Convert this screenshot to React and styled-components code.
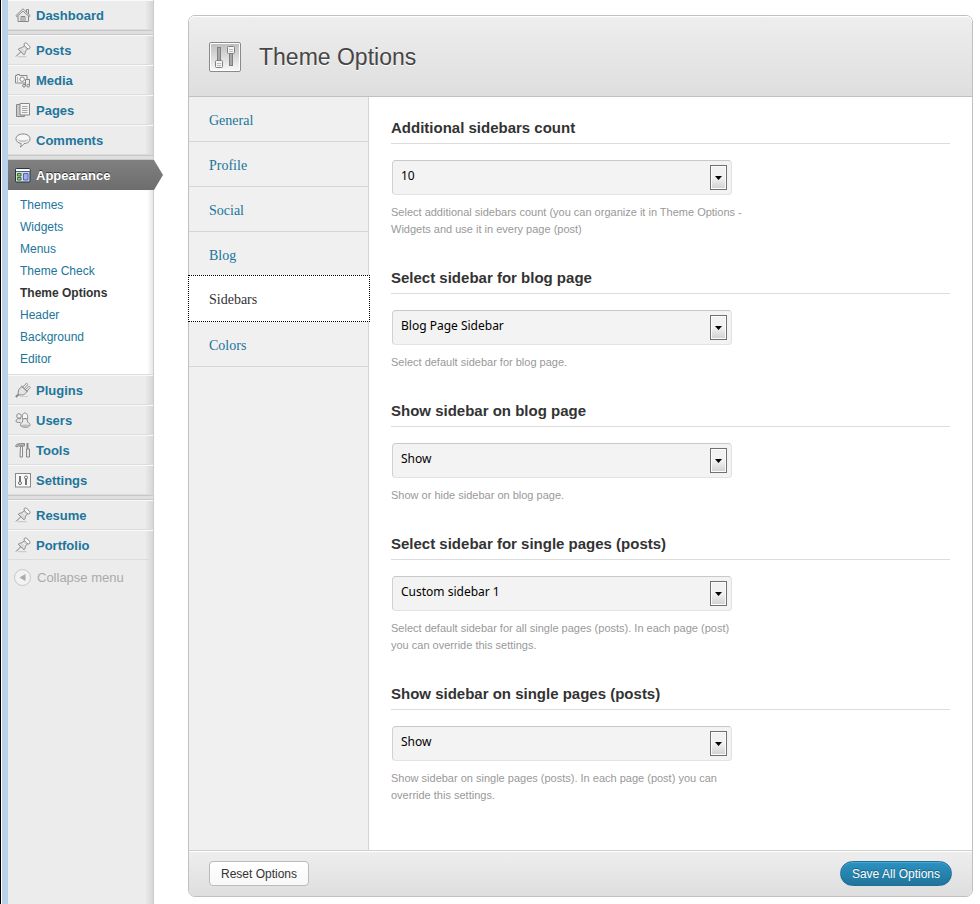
import React, { useId, useState } from "react";
import styled, { createGlobalStyle, css } from "styled-components";

const GlobalStyle = createGlobalStyle`
  *, *::before, *::after { box-sizing: border-box; }
  body {
    margin: 0;
    background: #fff;
    color: #333;
    font-family: "Liberation Sans", Arial, sans-serif;
    font-size: 13px;
  }
  a { text-decoration: none; }
  ul { list-style: none; margin: 0; padding: 0; }
`;

const Page = styled.div`
  display: flex;
  min-height: 100vh;
  border-left: 1px solid #000;
`;

const WindowEdge = styled.div`
  flex: none;
  width: 7px;
  background: #b9d1ea;
  border-left: 1px solid #fff;
`;

const Menu = styled.nav`
  flex: none;
  width: 146px;
  background: linear-gradient(to left, #d6d6d6, #ececec 8px);
  border-right: 1px solid #ccc;
`;

const MenuItem = styled.li`
  border-top: 1px solid #f9f9f9;
  border-bottom: 1px solid #dcdcdc;
`;

const MenuLink = styled.a`
  display: flex;
  align-items: center;
  gap: 5px;
  height: 28px;
  padding-left: 7px;
  font-weight: bold;
  color: #21759b;
`;

const CurrentLink = styled(MenuLink)`
  position: relative;
  height: 30px;
  margin-right: -1px;
  color: #fff;
  background: linear-gradient(#808080, #6d6d6d);
  text-shadow: 0 -1px 0 #333;

  &::after {
    content: "";
    position: absolute;
    left: 100%;
    top: 0;
    width: 9px;
    height: 100%;
    background: linear-gradient(#808080, #6d6d6d);
    clip-path: polygon(0 0, 100% 50%, 0 100%);
  }
`;

const Separator = styled.li`
  height: 5px;
  background: #dfdfdf;
  border-top: 1px solid #c8c8c8;
  border-bottom: 1px solid #c8c8c8;
`;

const SubMenu = styled.ul`
  padding: 4px 0 4px 12px;
  background: linear-gradient(to left, #e6e6e6, #fff 6px);
  border-bottom: 1px solid #dcdcdc;
`;

const SubLink = styled.a`
  display: block;
  font-size: 12px;
  line-height: 22px;
  color: ${(p) => (p.$current ? "#333" : "#21759b")};
  font-weight: ${(p) => (p.$current ? "bold" : "normal")};
`;

const CollapseButton = styled.button`
  display: flex;
  align-items: center;
  gap: 6px;
  height: 34px;
  padding: 0 0 0 6px;
  border: 0;
  background: none;
  font: inherit;
  color: #aaa;
`;

const Icon = styled.svg`
  flex: none;
  display: block;
  width: ${(p) => p.$size || 16}px;
  height: ${(p) => p.$size || 16}px;
`;

const Main = styled.main`
  flex: 1;
  min-width: 0;
  padding: 15px 7px 7px 34px;
`;

const Panel = styled.form`
  border: 1px solid #c0c0c0;
  border-radius: 7px;
`;

const PanelHeader = styled.header`
  display: flex;
  align-items: center;
  gap: 18px;
  height: 81px;
  padding: 2px 20px 0;
  background: linear-gradient(#eeeeee, #dedede);
  border-bottom: 1px solid #c0c0c0;
  border-radius: 6px 6px 0 0;
  box-shadow: inset 0 1px 0 #fff;
`;

const Title = styled.h1`
  margin: 0;
  font-size: 23px;
  font-weight: normal;
  line-height: 28px;
  color: #464646;
  text-shadow: 0 1px 0 #fff;
`;

const PanelBody = styled.div`
  display: grid;
  grid-template-columns: 180px 1fr;
`;

const Tabs = styled.nav`
  background: #f0f0f0;
  border-right: 1px solid #d5d5d5;
`;

const selectedTab = css`
  position: relative;
  width: calc(100% + 3px);
  height: 47px;
  margin: -2px -2px 0 -1px;
  border: 1px dotted #000;
  background: #fff;
  color: #333;
`;

const Tab = styled.button`
  display: flex;
  align-items: center;
  width: 100%;
  height: 45px;
  padding: 3px 20px 0;
  border: 0;
  border-bottom: 1px solid #d5d5d5;
  background: none;
  font-family: "Liberation Serif", Georgia, serif;
  font-size: 14px;
  color: #21759b;
  ${(p) => p.$selected && selectedTab}
`;

const Fields = styled.div`
  padding: 21px 22px 16px;
`;

const Field = styled.section`
  padding-bottom: 30px;
`;

const FieldTitle = styled.label`
  display: block;
  margin-bottom: 16px;
  padding-bottom: 5px;
  border-bottom: 1px solid #dcdcdc;
  font-size: 15px;
  font-weight: bold;
  line-height: 20px;
`;

const SelectBox = styled.div`
  position: relative;
  max-width: 340px;
  margin-left: 1px;
`;

const Select = styled.select`
  appearance: none;
  display: block;
  width: 100%;
  height: 35px;
  padding: 0 30px 4px 8px;
  border: 1px solid #e2e2e2;
  border-top-color: #c8c8c8;
  border-left-color: #d0d0d0;
  border-radius: 4px;
  background: #f3f3f3;
  font-family: "Noto Sans", "Open Sans", sans-serif;
  font-size: 12px;
  color: #000;
`;

const SelectArrow = styled.span`
  position: absolute;
  top: 5px;
  right: 5px;
  display: grid;
  place-items: center;
  width: 17px;
  height: 25px;
  border: 1px solid #707070;
  box-shadow: inset 0 0 0 1px #fcfcfc;
  background: linear-gradient(#f2f2f2 50%, #d0d0d0);
  pointer-events: none;
`;

const Help = styled.p`
  max-width: 352px;
  margin: 9px 0 0;
  font-size: 11px;
  line-height: 17px;
  color: #999;
`;

const PanelFooter = styled.footer`
  display: flex;
  justify-content: space-between;
  padding: 10px 20px;
  border-top: 1px solid #d0d0d0;
  border-radius: 0 0 6px 6px;
  background: linear-gradient(#eeeeee, #dedede);
  box-shadow: inset 0 1px 0 #fff;
`;

const Button = styled.button`
  height: 25px;
  padding: 0 11px;
  border: 1px solid #bbb;
  border-radius: 4px;
  background: linear-gradient(#fff, #f8f8f8);
  font-family: inherit;
  font-size: 12px;
  color: #333;
`;

const PrimaryButton = styled(Button)`
  border-color: #1f6f96;
  border-radius: 13px;
  background: linear-gradient(#2b92c2, #21759b);
  box-shadow: inset 0 1px 0 #4ba6d0;
  color: #fff;
  text-shadow: 0 -1px 0 #1b607f;
`;

const ICONS = {
  dashboard: (
    <>
      <path d="M11.500 5V2.500h2V7" fill="#eee" />
      <path d="M3 8.500V14.500h10.500V8.500L8 3.500z" fill="#e8e8e8" />
      <path d="M.8 8.700 8 1.800l7.200 6.900-1 .9L8 4 1.800 9.600z" fill="#f6f6f6" />
      <path d="M6 14.500V9.500h4v5M8 9.500v5" />
    </>
  ),
  pin: (
    <>
      <path d="M3 14.700h8.500" stroke="#c4c4c4" />
      <path d="M1 14.500 6 9.500" stroke="#777" />
      <path d="M3.200 7.200C5 5.800 6.500 6 7.600 5.200L9.800 3.200l3.200 3.200-2 2.200c-.8 1.100-.5 2.700-1.900 4.200z" fill="#dcdcdc" />
      <path d="M9 2.200C9.300.8 10.500.7 11.500 1.300c1.200.8 2.500 2 3.200 3.200.6 1 .4 2.200-1 2.500C11.500 6.500 9.500 4.500 9 2.200z" fill="#f8f8f8" />
      <path d="M8.300 6.200l1.800 1.800" stroke="#fff" />
    </>
  ),
  media: (
    <>
      <path d="M.5 3.500H2v-1h2.500v1H12v7.500H.5z" fill="#f2f2f2" />
      <path d="M2.500 5v5" stroke="#b5b5b5" />
      <circle cx="7.200" cy="7.200" r="2.200" fill="#fff" />
      <path d="M10.500 13.500v-6h4v6" fill="#ececec" />
      <circle cx="9" cy="13.700" r="1.400" fill="#ddd" />
      <circle cx="13.200" cy="13.700" r="1.400" fill="#ddd" />
    </>
  ),
  pages: (
    <>
      <path d="M5 2.500H1.500v12h8V13" fill="#c8c8c8" />
      <path d="M5 1.500h9.500v11.500H5z" fill="#f4f4f4" />
      <path d="M7 4.500h5.500M7 6.500h5.500M7 8.500h5.500M7 10.500h5.500" stroke="#a5a5a5" />
    </>
  ),
  comments: (
    <>
      <path d="M5 15c1-1 1.300-2 1.200-3.500C3 11 1 9.300 1 6.800 1 3.800 4 2 8 2s7 1.800 7 4.800-2.500 4.500-6 4.800C8 13.200 7 14.300 5 15z" fill="#f6f6f6" />
      <path d="M2.500 7C4 8.500 11 8.800 13.500 7c0 4-10.500 4.500-11 0z" fill="#c6c6c6" stroke="none" />
    </>
  ),
  appearance: (
    <>
      <rect x=".5" y="1.500" width="14.500" height="13.500" rx="1" fill="#c4e3e8" stroke="#263349" />
      <path d="M1 2h13.500v2H1z" fill="#fff" stroke="none" />
      <path d="M1 4.500h14" stroke="#52617a" />
      <path d="M2.500 6.500h3.500V9H2.500zM2.500 10.500h3.500V13H2.500z" fill="#a5c64a" stroke="#46692c" />
      <path d="M8.500 6.500h4.500V13H8.500z" fill="#a5aaf0" stroke="#5a60b8" />
    </>
  ),
  plugins: (
    <>
      <path d="M.8 15 4 12" strokeWidth="2" />
      <path d="M5 14.500h8" stroke="#cfcfcf" />
      <path d="M3.500 12.500C2.500 9 4 6.500 7 4.500l5 4.800C10.500 12.500 7.500 13.800 3.500 12.500z" fill="#e4e4e4" />
      <path d="M7.800 5 11.500 1.200l1.300 1.200L9.400 6.400M10.600 7.800l3.400-3.600 1.300 1.300-3.500 3.600" fill="#f6f6f6" />
      <path d="M6.300 3.900 12.700 9.800" />
    </>
  ),
  users: (
    <>
      <circle cx="4" cy="4" r="2.300" fill="#f2f2f2" />
      <path d="M6 6.800C3 5.800 1 7.500 1 9.200c0 1.200 2 1.500 4.500 1.200" fill="#e6e6e6" />
      <path d="M7.500 7C7 3 8 1 10 1s3 2 2.500 6z" fill="#f6f6f6" />
      <path d="M10 6.500c-2.500 0-2.500 2-2.500 3.500C6 11 5.500 12 5.500 13c0 3 9.500 3 9.500 0 0-1-.5-2-2.500-3 0-1.500 0-3.500-2.500-3.500z" fill="#eaeaea" />
      <ellipse cx="10.300" cy="13.800" rx="3.800" ry="1.200" fill="#bbb" stroke="none" />
    </>
  ),
  tools: (
    <>
      <path d="M.5 4C1.500 2 3 1.500 9.500 1.500v2.500H3.500L1.500 5z" fill="#b5b5b5" />
      <path d="M5.500 4.500h2V15h-2.500z" fill="#f2f2f2" />
      <path d="M12.500 1v6" strokeWidth="2" />
      <path d="M11.500 7h3v8h-3z" fill="#e6e6e6" />
    </>
  ),
  settings: (
    <>
      <rect x=".5" y="1.500" width="15" height="13.500" fill="#f8f8f8" />
      <path d="M5 4v6.500M11 6.500V13" stroke="#777" strokeWidth="2" />
      <circle cx="5" cy="11" r="1.500" fill="#fff" stroke="#666" />
      <circle cx="11" cy="5.500" r="1.500" fill="#fff" stroke="#666" />
    </>
  ),
};

function MenuIcon({ name }) {
  return (
    <Icon viewBox="0 0 16 16" fill="none" stroke="#888" aria-hidden="true">
      {ICONS[name]}
    </Icon>
  );
}

function SlidersIcon() {
  return (
    <Icon $size={32} viewBox="0 0 32 32" aria-hidden="true">
      <defs>
        <linearGradient id="plate" x1="0" y1="0" x2="0" y2="1">
          <stop offset="0" stopColor="#bfbfbf" />
          <stop offset="1" stopColor="#f7f7f7" />
        </linearGradient>
      </defs>
      <rect x=".5" y="1.500" width="31" height="29" rx="1.500" fill="#fff" stroke="#8a8a8a" />
      <rect x="2" y="3" width="28" height="26" fill="url(#plate)" />
      <rect x="8.500" y="6.500" width="3" height="15" fill="#a8a8a8" stroke="#808080" />
      <rect x="20.500" y="9.500" width="3" height="15" fill="#a8a8a8" stroke="#808080" />
      <rect x="6.500" y="19.500" width="7" height="7" rx="1" fill="#f4f4f4" stroke="#808080" />
      <rect x="18.500" y="5.500" width="7" height="7" rx="1" fill="#f4f4f4" stroke="#808080" />
      <path d="M8 22.500h4M8 24.500h4M20 8.500h4M20 10.500h4" stroke="#bbb" />
    </Icon>
  );
}

const TOP = [["Posts", "pin"], ["Media", "media"], ["Pages", "pages"], ["Comments", "comments"]];
const ADMIN = [["Plugins", "plugins"], ["Users", "users"], ["Tools", "tools"], ["Settings", "settings"]];
const CUSTOM = [["Resume", "pin"], ["Portfolio", "pin"]];
const APPEARANCE = ["Themes", "Widgets", "Menus", "Theme Check", "Theme Options", "Header", "Background", "Editor"];
const TABS = ["General", "Profile", "Social", "Blog", "Sidebars", "Colors"];

const FIELDS = [
  {
    title: "Additional sidebars count",
    value: "10",
    help: "Select additional sidebars count (you can organize it in Theme Options - Widgets and use it in every page (post)",
  },
  { title: "Select sidebar for blog page", value: "Blog Page Sidebar", help: "Select default sidebar for blog page." },
  { title: "Show sidebar on blog page", value: "Show", help: "Show or hide sidebar on blog page." },
  {
    title: "Select sidebar for single pages (posts)",
    value: "Custom sidebar 1",
    help: "Select default sidebar for all single pages (posts). In each page (post) you can override this settings.",
  },
  {
    title: "Show sidebar on single pages (posts)",
    value: "Show",
    help: "Show sidebar on single pages (posts). In each page (post) you can override this settings.",
  },
];

function MenuEntries({ items }) {
  return items.map(([label, icon]) => (
    <MenuItem key={label}>
      <MenuLink href="#">
        <MenuIcon name={icon} />
        {label}
      </MenuLink>
    </MenuItem>
  ));
}

function SelectField({ title, value, help }) {
  const id = useId();
  return (
    <Field>
      <FieldTitle htmlFor={id}>{title}</FieldTitle>
      <SelectBox>
        <Select id={id} defaultValue={value} aria-describedby={`${id}-help`}>
          <option>{value}</option>
        </Select>
        <SelectArrow>
          <svg width="7" height="4" viewBox="0 0 7 4" aria-hidden="true">
            <path d="M0 0h7L3.500 4z" />
          </svg>
        </SelectArrow>
      </SelectBox>
      <Help id={`${id}-help`}>{help}</Help>
    </Field>
  );
}

export default function App() {
  const [tab, setTab] = useState("Sidebars");
  return (
    <Page>
      <GlobalStyle />
      <WindowEdge />
      <Menu>
        <ul>
          <MenuEntries items={[["Dashboard", "dashboard"]]} />
          <Separator />
          <MenuEntries items={TOP} />
          <Separator />
          <li>
            <CurrentLink href="#">
              <MenuIcon name="appearance" />
              Appearance
            </CurrentLink>
            <SubMenu>
              {APPEARANCE.map((label) => (
                <li key={label}>
                  <SubLink href="#" $current={label === "Theme Options"}>{label}</SubLink>
                </li>
              ))}
            </SubMenu>
          </li>
          <MenuEntries items={ADMIN} />
          <Separator />
          <MenuEntries items={CUSTOM} />
        </ul>
        <CollapseButton type="button">
          <Icon $size={17} viewBox="0 0 17 17" aria-hidden="true">
            <circle cx="8.500" cy="8.500" r="8" fill="#f2f2f2" stroke="#c6c6c6" />
            <path d="M11.500 5v7l-6-3.500z" fill="#aaa" />
          </Icon>
          Collapse menu
        </CollapseButton>
      </Menu>
      <Main>
        <Panel onSubmit={(e) => e.preventDefault()}>
          <PanelHeader>
            <SlidersIcon />
            <Title>Theme Options</Title>
          </PanelHeader>
          <PanelBody>
            <Tabs>
              {TABS.map((label) => (
                <Tab key={label} type="button" $selected={label === tab} onClick={() => setTab(label)}>
                  {label}
                </Tab>
              ))}
            </Tabs>
            <Fields>
              {FIELDS.map((field) => (
                <SelectField key={field.title} {...field} />
              ))}
            </Fields>
          </PanelBody>
          <PanelFooter>
            <Button type="reset">Reset Options</Button>
            <PrimaryButton type="submit">Save All Options</PrimaryButton>
          </PanelFooter>
        </Panel>
      </Main>
    </Page>
  );
}
